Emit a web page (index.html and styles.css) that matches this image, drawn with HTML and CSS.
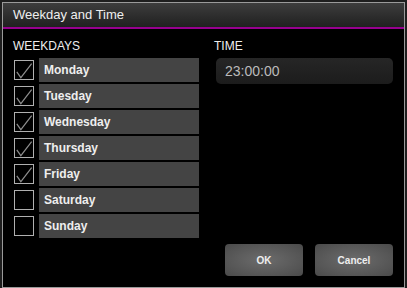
FILE: index.html
```html
<!DOCTYPE html>
<html lang="en">
<head>
    <meta charset="UTF-8">
    <title>Weekday and Time</title>
    <link rel="stylesheet" href="styles.css">
</head>
<body>
    <div class="dialog">
        <div class="header">Weekday and Time</div>

        <div class="content">
            <div class="weekdays">
                <h4>WEEKDAYS</h4>
                <div class="day">
                    <span class="box checked"><svg viewBox="0 0 20 20"><path d="M2 12 L6.5 18.5 L18.5 3"/></svg></span>
                    <span class="name">Monday</span>
                </div>
                <div class="day">
                    <span class="box checked"><svg viewBox="0 0 20 20"><path d="M2 12 L6.5 18.5 L18.5 3"/></svg></span>
                    <span class="name">Tuesday</span>
                </div>
                <div class="day">
                    <span class="box checked"><svg viewBox="0 0 20 20"><path d="M2 12 L6.5 18.5 L18.5 3"/></svg></span>
                    <span class="name">Wednesday</span>
                </div>
                <div class="day">
                    <span class="box checked"><svg viewBox="0 0 20 20"><path d="M2 12 L6.5 18.5 L18.5 3"/></svg></span>
                    <span class="name">Thursday</span>
                </div>
                <div class="day">
                    <span class="box checked"><svg viewBox="0 0 20 20"><path d="M2 12 L6.5 18.5 L18.5 3"/></svg></span>
                    <span class="name">Friday</span>
                </div>
                <div class="day">
                    <span class="box"></span>
                    <span class="name">Saturday</span>
                </div>
                <div class="day">
                    <span class="box"></span>
                    <span class="name">Sunday</span>
                </div>
            </div>

            <div class="time">
                <h4>TIME</h4>
                <div class="time-input">23:00:00</div>
            </div>
        </div>

        <div class="footer">
            <button>OK</button>
            <button>Cancel</button>
        </div>
    </div>
</body>
</html>
```

FILE: styles.css
```css
body {
    margin: 0;
    padding: 2px;
    background: #1e1e1e;
    font-family: "Liberation Sans", Arial, sans-serif;
}

.dialog {
    width: 401px;
    height: 284px;
    border: 1px solid #9a9a9a;
    background: #000000;
    display: flex;
    flex-direction: column;
}

.header {
    height: 24px;
    line-height: 24px;
    padding-left: 10px;
    font-size: 13px;
    color: #eeeeee;
    background: linear-gradient(#3d3d3d, #202020);
    border-bottom: 2px solid #96008f;
}

.content {
    display: flex;
    padding: 10px 11px 0 10px;
}

.content h4 {
    margin: 0 0 5px;
    font-size: 12px;
    line-height: 14px;
    font-weight: normal;
    color: #eeeeee;
}

.weekdays {
    width: 186px;
}

.day {
    display: flex;
    align-items: center;
    height: 24px;
    margin-bottom: 2px;
}

.box {
    width: 18px;
    height: 18px;
    margin-left: 1px;
    margin-right: 5px;
    border: 1px solid #b0b0b0;
}

.box svg {
    display: block;
    width: 18px;
    height: 18px;
}

.box path {
    fill: none;
    stroke: #8e8e8e;
    stroke-width: 1.3;
}

.name {
    flex: 1;
    height: 24px;
    line-height: 24px;
    padding-left: 5px;
    background: #444444;
    font-size: 12px;
    font-weight: bold;
    color: #eeeeee;
}

.time {
    margin-left: 15px;
    flex: 1;
}

.time-input {
    margin: 3px 0 0 2px;
    height: 26px;
    line-height: 26px;
    padding-left: 9px;
    border-radius: 5px;
    background: linear-gradient(#262626, #1c1c1c);
    color: #bbbbbb;
    font-size: 14px;
}

.footer {
    display: flex;
    justify-content: flex-end;
    gap: 12px;
    padding: 4px 11px 0 0;
}

.footer button {
    width: 78px;
    height: 32px;
    border: none;
    border-radius: 4px;
    background: radial-gradient(ellipse at center, #6c6c6c 0%, #555555 70%, #4a4a4a 100%);
    color: #eeeeee;
    font-family: "Liberation Sans", Arial, sans-serif;
    font-size: 10px;
    font-weight: bold;
    cursor: pointer;
}
```
